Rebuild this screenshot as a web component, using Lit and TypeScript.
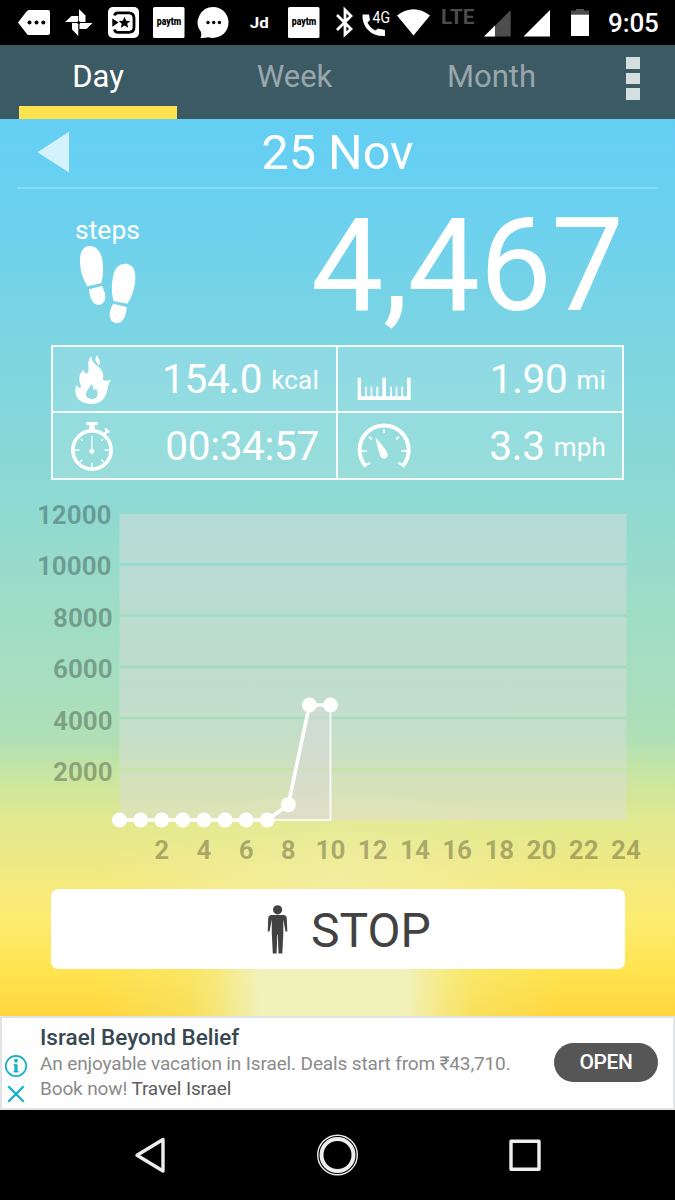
import { LitElement, html, svg, css } from "lit";
import { customElement } from "lit/decorators.js";

const font = css`
  :host {
    display: block;
    font-family: Roboto, "Noto Sans", sans-serif;
  }
  svg {
    display: block;
    font-family: Roboto, sans-serif;
  }
`;

@customElement("status-bar")
class StatusBar extends LitElement {
  static styles = [
    font,
    css`
      .bar {
        display: flex;
        height: 45px;
        background: #000;
        color: #fff;
      }
      .clock {
        flex: 1;
        padding-left: 8px;
        font-size: 26px;
        font-weight: 500;
        line-height: 47px;
        letter-spacing: -0.1px;
      }
    `,
  ];

  cell(x: number, w: number, body: unknown) {
    return html`<svg width=${w} height="45" viewBox="${x} 0 ${w} 45" fill="#fff">${body}</svg>`;
  }

  paytm(x: number) {
    return svg`<rect x=${x} y="7" width="31.500" height="31" rx="1.500"/>
      <text x=${x + 3.8} y="25" font-size="10.500" font-weight="900" fill="#000" textLength="24.500" lengthAdjust="spacingAndGlyphs">paytm</text>`;
  }

  render() {
    return html`<div class="bar">
      ${this.cell(0, 58, svg`<path d="M18 22.500L26.500 11.500Q27.500 10 29 10H48Q50 10 50 12V33Q50 35 48 35H29Q27.500 35 26.500 33.500Z"/>
        <g fill="#000"><circle cx="29.500" cy="22.500" r="2"/><circle cx="36.500" cy="22.500" r="2"/><circle cx="43.300" cy="22.500" r="2"/></g>`)}
      ${this.cell(58, 42, svg`<path d="M79 9L85.500 15.500V22H79ZM92.500 23L86.500 29H79.500V23ZM78.300 36L72 29.500V23H78.300ZM65 22L71.500 16H78.300V22Z"/><circle cx="78.700" cy="22.500" r="1.500" fill="#000"/>`)}
      ${this.cell(100, 46, svg`<rect x="108" y="7" width="31" height="31" rx="5"/>
        <path d="M114.500 15.500Q115 12.800 118 12.800H128.500Q134 12.800 134 18V27.500Q134 32.300 128.500 32.300H118Q115 32.300 114.500 29.500" fill="none" stroke="#000" stroke-width="2.800"/>
        <path d="M112.300 18.500L118.500 22.600L112.300 26.700ZM124.500 16.800L126.200 20.700L130.300 21L127.200 23.700L128.200 27.700L124.500 25.500L120.800 27.700L121.800 23.700L118.700 21L122.800 20.700Z" fill="#000"/>`)}
      ${this.cell(146, 45, this.paytm(153))}
      ${this.cell(191, 45, svg`<path d="M214 7A15.700 15.500 0 1 1 208 37.200Q205 38.200 200.500 38Q202 35.500 201 32A15.700 15.500 0 0 1 214 7Z"/>
        <g fill="#000"><circle cx="208" cy="22.500" r="1.700"/><circle cx="213.700" cy="22.500" r="1.700"/><circle cx="219.400" cy="22.500" r="1.700"/></g>`)}
      ${this.cell(236, 45, svg`<text x="249.800" y="28.300" font-size="15.500" font-weight="700" textLength="19" lengthAdjust="spacingAndGlyphs">Jd</text>`)}
      ${this.cell(281, 46, this.paytm(288))}
      ${this.cell(327, 31, svg`<path d="M337 15L351 29L345 34.500V10L351 16L337 30" fill="none" stroke="#fff" stroke-width="2.800"/>`)}
      ${this.cell(358, 36, svg`<path d="M362.500 14.500H369L370 20L367.500 22.500Q370 28 375.500 30.500L378 28.500L385 30V36Q374 36.500 368 30Q362 24 362.500 14.500Z"/>
        <text x="372.500" y="22.700" font-size="17" textLength="17.500" lengthAdjust="spacingAndGlyphs">4G</text>`)}
      ${this.cell(394, 42, svg`<path d="M397 15.500Q413.500 3 430 15.500L413.500 35.500Z"/>`)}
      ${this.cell(436, 44, svg`<text x="441" y="23.800" font-size="20" font-weight="700" fill="#4d4d4d" textLength="33.500" lengthAdjust="spacingAndGlyphs">LTE</text>`)}
      ${this.cell(480, 38, svg`<path d="M510.700 10V36.500H484Z" fill="#4d4d4d"/><path d="M495 25.600V36.500H484Z"/>`)}
      ${this.cell(518, 42, svg`<path d="M550 10V36.500H523.500Z"/>`)}
      ${this.cell(560, 40, svg`<path d="M571 10.500H576V9H584V10.500H589V16H571Z" fill="#4d4d4d"/><path d="M571 14.700H589V36H571Z"/>`)}
      <div class="clock">9:05</div>
    </div>`;
  }
}

@customElement("tab-strip")
class TabStrip extends LitElement {
  static styles = [
    font,
    css`
      .tabs {
        display: grid;
        grid-template-columns: 196px 197px 197px 1fr;
        height: 74px;
        background: #3b5a64;
      }
      .tab {
        display: flex;
        flex-direction: column;
        align-items: center;
        color: #99a7ab;
        font-size: 31px;
        line-height: 64px;
      }
      .tab.active {
        color: #fff;
      }
      .label {
        height: 61px;
      }
      .mark {
        width: 158px;
        height: 13px;
        background: #ffe34e;
      }
      .more {
        display: flex;
        flex-direction: column;
        gap: 4px;
        padding: 12px 0 0 36px;
      }
      .dot {
        width: 14px;
        height: 11.500px;
        background: #d6dfe0;
      }
    `,
  ];
  render() {
    return html`<div class="tabs">
      <div class="tab active"><div class="label">Day</div><div class="mark"></div></div>
      <div class="tab"><div class="label">Week</div></div>
      <div class="tab"><div class="label">Month</div></div>
      <div class="more"><div class="dot"></div><div class="dot"></div><div class="dot"></div></div>
    </div>`;
  }
}

const flame = html`<svg width="46" height="54" viewBox="90 51 138 162" fill="#fff">
  <path fill-rule="evenodd" d="M155 64C154 76 160 84 172 93C188 105 193 118 188 135C196 139 204 137 213 135C202 146 206 160 198 178C191 198 175 207 155 207C126 207 106 192 106 168C106 161 107 156 110 149C112 154 115 158 121 159C127 153 116 144 118 128C119 116 124 110 132 104C132 111 135 114 140 116C150 108 144 96 145 84C146 75 149 69 155 64ZM153 147C151 160 138 164 138 178C138 187 145 192 155 192C165 192 173 186 173 177C173 170 170 165 167 160C165 164 163 166 160 166C161 158 159 152 153 147Z"/>
  <path d="M174 60C172 69 181 74 180 82C180 87 178 90 175 92C175 83 165 81 166 72C167 66 170 62 174 60Z"/></svg>`;

const stopwatch = html`<svg width="46" height="54" viewBox="89 252 138 162" fill="#fff" stroke="#fff">
  <circle cx="155" cy="345" r="57.500" fill="none" stroke-width="11"/>
  <path stroke="none" d="M138 261H172V270H163L164 287H146L147 270H138Z"/>
  <path d="M194 281L207 292M192 298L201 287" fill="none" stroke-width="7"/>
  <path d="M154.500 302V348" fill="none" stroke-width="4"/><circle cx="154.500" cy="349" r="7.500" stroke="none"/>
  <path fill="none" stroke-width="4.500" d="M103 345H117M193 345H207M154.500 383V397M122 312L127 317M188 312L183 317M119 381L126 374M190 381L183 374"/></svg>`;

const ruler = html`<svg width="56" height="54" viewBox="64 51 168 162" fill="#fff">
  <path d="M69 128H79V184H92V155H97V184H108V155H113V184H125V155H131V184H143V128H154V184H167V155H172V184H183V155H188V184H200V155H205V184H217V128H228V195H69Z"/></svg>`;

const gauge = html`<svg width="56" height="54" viewBox="64 252 168 162" fill="none" stroke="#fff">
  <path d="M94 394A73.500 73.500 0 1 1 203 394" stroke-width="12"/>
  <path d="M148 282V294M103 305L112 313M193 305L184 313M80 348H96M200 348H217M91 391L106 384M206 391L191 384" stroke-width="6"/>
  <path d="M122 306C135 321 151 340 158 354C163 369 147 377 138 365C133 355 126 325 122 306Z" fill="#fff" stroke="none"/></svg>`;

@customElement("stat-table")
class StatTable extends LitElement {
  static styles = [
    font,
    css`
      .table {
        display: grid;
        grid-template-columns: 283px 284px;
        grid-template-rows: 64px 65px;
        gap: 2px;
        width: 569px;
        height: 131px;
        box-sizing: content-box;
        border: 2px solid #f4fcfc;
        background:
          linear-gradient(#f4fcfc, #f4fcfc) 283px 0 / 2px 100% no-repeat,
          linear-gradient(#f4fcfc, #f4fcfc) 0 64px / 100% 2px no-repeat,
          rgba(255, 255, 255, 0.13);
      }
      .cell {
        display: flex;
        align-items: center;
        justify-content: space-between;
        padding: 0 17px 0 17px;
        color: #fff;
      }
      .right {
        padding: 0 16px 0 18px;
      }
      .value {
        display: flex;
        align-items: baseline;
        gap: 9px;
        font-size: 40.500px;
        line-height: 60px;
        letter-spacing: -0.3px;
      }
      .unit {
        font-size: 26px;
        line-height: 26px;
        letter-spacing: 0.2px;
        transform: translateY(-4px);
      }
    `,
  ];
  render() {
    return html`<div class="table">
      <div class="cell">${flame}<div class="value">154.0<span class="unit">kcal</span></div></div>
      <div class="cell right">${ruler}<div class="value">1.90<span class="unit">mi</span></div></div>
      <div class="cell">${stopwatch}<div class="value">00:34:57</div></div>
      <div class="cell right">${gauge}<div class="value">3.3<span class="unit">mph</span></div></div>
    </div>`;
  }
}

@customElement("step-chart")
class StepChart extends LitElement {
  static styles = [font];
  private values = [0, 0, 0, 0, 0, 0, 0, 0, 600, 4490, 4490];

  render() {
    const left = 119.5;
    const base = 820;
    const px = (h: number) => left + h * 21.1;
    const py = (v: number) => base - (v * 51.25) / 2000;
    const pts = this.values.map((v, h) => `${px(h)},${py(v)}`).join(" ");
    const rows = [0, 1, 2, 3, 4, 5];
    const shades = ["", "#c5e5a8", "#aaddbc", "#a3dcc1", "#9ddbc8", "#93dbcd"];
    return html`<svg width="675" height="390" viewBox="0 490 675 390">
      <rect x="119.500" y="514" width="507" height="306.500" fill="rgba(222,222,222,0.470)"/>
      ${[1, 2, 3, 4, 5].map(
        (i) => svg`<rect x="119.500" y=${py(i * 2000) - 0.8} width="507" height="2.600" fill=${shades[i]}/>`
      )}
      <g font-size="26" font-weight="700" fill="#000" fill-opacity="0.290">
        ${rows.map((i) => {
          const v = 12000 - i * 2000;
          return svg`<text x=${i < 2 ? 111.5 : 112.7} y=${524 + i * 51.4} text-anchor="end">${v}</text>`;
        })}
        ${Array.from({ length: 12 }, (_, i) => (i + 1) * 2).map(
          (h) => svg`<text x=${px(h)} y="858.600" text-anchor="middle">${h}</text>`
        )}
      </g>
      <polygon points="${pts} ${px(10)},${base}" fill="rgba(222,218,222,0.420)"/>
      <path d="M${px(7)} ${base}H${px(10)}V${py(4490)}" fill="none" stroke="#fff" stroke-width="1.700"/>
      <polyline points=${pts} fill="none" stroke="#fff" stroke-width="3.600"/>
      ${this.values.map((v, h) => svg`<circle cx=${px(h)} cy=${py(v)} r="7.500" fill="#fff"/>`)}
    </svg>`;
  }
}

@customElement("ad-banner")
class AdBanner extends LitElement {
  static styles = [
    font,
    css`
      .ad {
        display: grid;
        grid-template-columns: 38px 1fr auto;
        height: 94px;
        box-sizing: border-box;
        border: 2px solid #e2e3e5;
        background: #fefefe;
      }
      .copy {
        padding-top: 6px;
      }
      .title {
        font-size: 22.500px;
        font-weight: 500;
        line-height: 27px;
        color: #37474f;
      }
      .text {
        font-size: 19px;
        line-height: 24.500px;
        letter-spacing: -0.130px;
        color: #8b8b8b;
        white-space: nowrap;
      }
      .first {
        padding-top: 1px;
      }
      .brand {
        color: #5c5c5c;
      }
      .open {
        align-self: center;
        margin: 0 15px 2px 0;
        width: 104px;
        height: 39px;
        border-radius: 20px;
        background: #565656;
        color: #fff;
        font-size: 21px;
        font-weight: 500;
        line-height: 39px;
        text-align: center;
        letter-spacing: -0.4px;
      }
    `,
  ];
  render() {
    return html`<div class="ad">
      <svg width="38" height="90" viewBox="2 1018 38 90" fill="none" stroke="#10b0c8">
        <circle cx="16" cy="1066" r="10.200" stroke-width="1.700"/>
        <circle cx="16" cy="1060.700" r="1.900" fill="#10b0c8" stroke="none"/>
        <path d="M16 1064.300V1072.300" stroke-width="3.200"/><path d="M13.500 1064.900H16M13.500 1071.700H18.500" stroke-width="1.300"/>
        <path d="M8.300 1086.300L23.700 1101.700M23.700 1086.300L8.300 1101.700" stroke-width="2.200"/>
      </svg>
      <div class="copy">
        <div class="title">Israel Beyond Belief</div>
        <div class="text first">An enjoyable vacation in Israel. Deals start from ₹43,710.</div>
        <div class="text">Book now! <span class="brand">Travel Israel</span></div>
      </div>
      <div class="open">OPEN</div>
    </div>`;
  }
}

@customElement("app-root")
class AppRoot extends LitElement {
  static styles = [
    font,
    css`
      :host {
        width: 675px;
        height: 1200px;
        overflow: hidden;
        background: #000;
      }
      .page {
        display: flex;
        flex-direction: column;
        height: 897px;
        color: #fff;
        background:
          linear-gradient(90deg, rgba(244, 234, 120, 0) 14%, rgba(242, 234, 130, 0.4) 28%, rgba(241, 238, 155, 0.7) 33%, #f1f1ba 38.500%, #f1f1ba 60%, rgba(241, 240, 165, 0.7) 65%, rgba(240, 238, 140, 0.4) 70%, rgba(240, 238, 130, 0) 83%) 0 100% / 100% 50px no-repeat,
          radial-gradient(ellipse 250px 95px at 50% 765px, rgba(241, 240, 180, 0.6), rgba(241, 240, 180, 0) 100%),
          linear-gradient(#65cff3 0, #68d0f1 70px, #7bd4e3 211px, #8cd9d4 371px, #9cdcc8 471px, #a8debe 571px, #b0e0b5 621px, #cbe69f 661px, #e0e98f 701px, #f1e982 751px, #fdec71 801px, #ffe552 846px, #ffd63c 898px);
      }
      .head {
        display: grid;
        grid-template-columns: 84px 1fr 84px;
        height: 68px;
        margin: 0 17px;
        border-bottom: 2px solid rgba(255, 255, 255, 0.22);
      }
      .date {
        font-size: 48.500px;
        line-height: 67px;
        text-align: center;
      }
      .steps {
        display: flex;
        justify-content: space-between;
        height: 156px;
        padding: 0 52px 0 75px;
      }
      .caption {
        padding-top: 25px;
        font-size: 26.500px;
        line-height: 31px;
      }
      .feet {
        margin-top: -1px;
      }
      .count {
        font-size: 129px;
        line-height: 154px;
        letter-spacing: -0.7px;
      }
      .stats {
        padding-left: 51px;
      }
      .chart {
        padding-top: 10px;
      }
      .stop {
        display: flex;
        align-items: center;
        justify-content: center;
        gap: 23px;
        width: 574px;
        height: 80px;
        margin: 9px 0 0 50.500px;
        padding: 0 26px 0 48px;
        box-sizing: border-box;
        border-radius: 7px;
        background: #fff;
        color: #424242;
        font-size: 48px;
      }
      .word {
        padding-top: 2px;
      }
      .nav {
        display: flex;
        height: 90px;
        background: #000;
      }
    `,
  ];
  render() {
    return html`
      <status-bar></status-bar>
      <tab-strip></tab-strip>
      <div class="page">
        <div class="head">
          <svg width="84" height="68" viewBox="17 119 84 68"><path d="M37.500 152.300L69 131.700V172.500Z" fill="#fff" fill-opacity="0.720"/></svg>
          <div class="date">25 Nov</div>
        </div>
        <div class="steps">
          <div>
            <div class="caption">steps</div>
            <svg class="feet" width="66" height="80" viewBox="225 372 198 240" fill="#fff">
              <path d="M268 378C288 377 302 394 307 420C311 444 310 470 303 490L262 499C250 480 240 452 240 423C240 395 249 379 268 378Z"/>
              <path d="M267 508L306 498C312 510 317 522 316 532C315 546 306 555 295 555C278 554 269 534 267 508Z"/>
              <path d="M376 431C398 431 407 450 406 476C405 503 396 530 382 551L341 543C334 521 334 493 340 465C345 443 357 431 376 431Z"/>
              <path d="M340 551L380 561C379 586 370 609 350 609C337 608 329 598 329 584C329 573 333 562 340 551Z"/>
            </svg>
          </div>
          <div class="count">4,467</div>
        </div>
        <stat-table class="stats"></stat-table>
        <step-chart class="chart"></step-chart>
        <div class="stop">
          <svg width="22" height="50" viewBox="266 903 22 50" fill="#424242">
            <ellipse cx="277.600" cy="908.800" rx="4.600" ry="4.600"/>
            <path d="M271.500 914H283.700Q286.500 914 286.800 917.500L287.300 930.500H285.500L283.300 918.500V933L282.300 952.500H278.500L277.800 933.500H277.300L276.600 952.500H272.800L271.800 933V918.500L269.500 930.500H267.700L268.200 917.500Q268.500 914 271.500 914Z"/>
          </svg>
          <span class="word">STOP</span>
        </div>
      </div>
      <ad-banner></ad-banner>
      <div class="nav">
        <svg width="675" height="90" viewBox="0 1110 675 90" fill="none" stroke="#eee" stroke-linejoin="round">
          <path d="M163 1139.500V1171L137 1155.300Z" stroke-width="3.400"/>
          <circle cx="337.500" cy="1155" r="19.800" stroke-width="1.400"/>
          <circle cx="337.500" cy="1155" r="16" stroke-width="4"/>
          <rect x="511" y="1141.300" width="28" height="28" stroke-width="3.400"/>
        </svg>
      </div>
    `;
  }
}
